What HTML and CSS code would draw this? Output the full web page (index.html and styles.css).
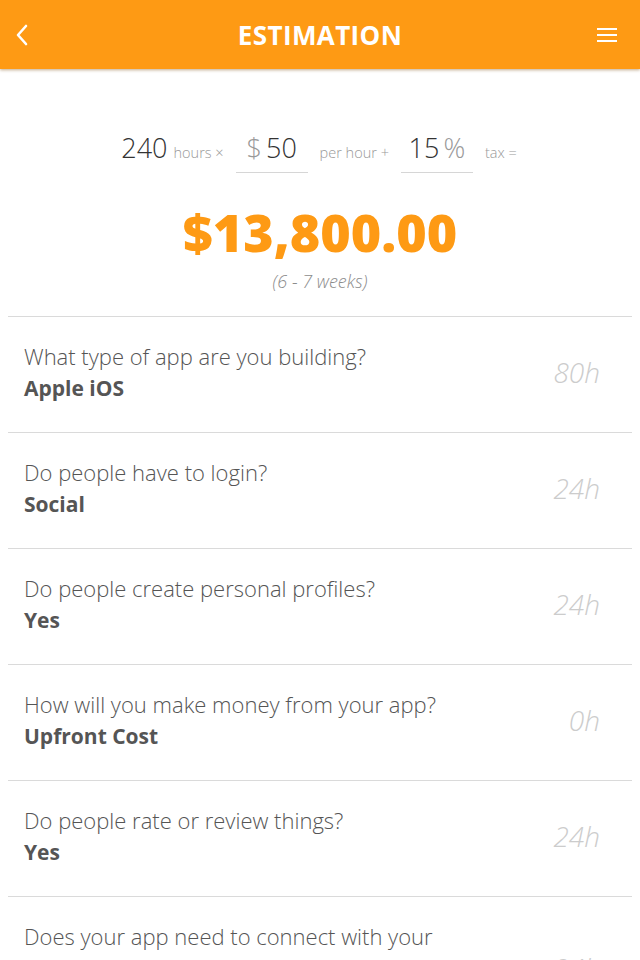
FILE: index.html
```html
<!DOCTYPE html>
<html lang="en">

<head>
  <meta charset="UTF-8" />
  <meta name="viewport" content="width=device-width, initial-scale=1.0" />
  <title>Estimation</title>
  <link rel="stylesheet" href="styles.css">
</head>

<body>
  <header class="topbar">
    <svg class="back" width="14" height="22" viewBox="0 0 14 22">
      <path d="M11 2 L3 11 L11 20" fill="none" stroke="#fff" stroke-width="2.6" stroke-linecap="round" stroke-linejoin="round" />
    </svg>
    <h1>ESTIMATION</h1>
    <svg class="menu" width="20" height="16" viewBox="0 0 20 16">
      <rect x="0" y="1" width="20" height="2" fill="#fff" />
      <rect x="0" y="7" width="20" height="2" fill="#fff" />
      <rect x="0" y="13" width="20" height="2" fill="#fff" />
    </svg>
  </header>

  <section class="calc">
    <div class="formula">
      <span class="num">240</span>
      <span class="unit">hours ×</span>
      <span class="field"><span class="sym">$</span> <span class="num">50</span></span>
      <span class="unit">per hour +</span>
      <span class="field"><span class="num">15</span> <span class="sym">%</span></span>
      <span class="unit">tax =</span>
    </div>
    <div class="total">$13,800.00</div>
    <div class="weeks">(6 - 7 weeks)</div>
  </section>

  <ul class="questions">
    <li class="row">
      <div class="qa">
        <div class="q">What type of app are you building?</div>
        <div class="a">Apple iOS</div>
      </div>
      <div class="hours">80h</div>
    </li>
    <li class="row">
      <div class="qa">
        <div class="q">Do people have to login?</div>
        <div class="a">Social</div>
      </div>
      <div class="hours">24h</div>
    </li>
    <li class="row">
      <div class="qa">
        <div class="q">Do people create personal profiles?</div>
        <div class="a">Yes</div>
      </div>
      <div class="hours">24h</div>
    </li>
    <li class="row">
      <div class="qa">
        <div class="q">How will you make money from your app?</div>
        <div class="a">Upfront Cost</div>
      </div>
      <div class="hours">0h</div>
    </li>
    <li class="row">
      <div class="qa">
        <div class="q">Do people rate or review things?</div>
        <div class="a">Yes</div>
      </div>
      <div class="hours">24h</div>
    </li>
    <li class="row">
      <div class="qa">
        <div class="q">Does your app need to connect with your website?</div>
        <div class="a">No</div>
      </div>
      <div class="hours">24h</div>
    </li>
  </ul>
</body>

</html>
```

FILE: styles.css
```css
* {
  box-sizing: border-box;
}

body {
  margin: 0;
  padding: 0;
  font-family: 'Open Sans', 'Lato', sans-serif;
  background-color: #ffffff;
  color: #555555;
  overflow: hidden;
}

.topbar {
  height: 69px;
  background-color: #fe9a14;
  display: flex;
  align-items: center;
  justify-content: space-between;
  padding: 0 23px 0 15px;
  box-shadow: 0 1px 3px rgba(150, 110, 60, 0.6);
  position: relative;
}

.topbar h1 {
  margin: 0;
  font-size: 26px;
  font-weight: 700;
  color: #ffffff;
  letter-spacing: 0.4px;
  padding-left: 14px;
}

.calc {
  padding-top: 60px;
  text-align: center;
}

.formula {
  display: flex;
  justify-content: center;
  align-items: baseline;
  padding-left: 4px;
}

.formula .num {
  font-size: 27px;
  font-weight: 300;
  color: #333333;
}

.formula .sym {
  font-size: 27px;
  font-weight: 300;
  color: #999999;
}

.formula .unit {
  font-size: 14.5px;
  font-weight: 300;
  color: #999999;
  margin: 0 6px;
}

.formula .unit:first-of-type {
  margin-right: 12px;
}

.field {
  display: inline-block;
  width: 72px;
  margin: 0 6px;
  padding-bottom: 6px;
  border-bottom: 1px solid #d6d6d6;
  text-align: center;
}

.total {
  margin-top: 28px;
  font-size: 52px;
  font-weight: 800;
  color: #fe9a14;
  line-height: 62px;
}

.weeks {
  margin-top: 6px;
  font-size: 18px;
  font-style: italic;
  font-weight: 300;
  color: #8c8c8c;
}

.questions {
  list-style: none;
  margin: 23px 8px 0;
  padding: 0;
}

.row {
  min-height: 116px;
  border-top: 1px solid #dadada;
  display: flex;
  align-items: center;
  justify-content: space-between;
  padding: 23px 32px 28px 16px;
}

.qa {
  max-width: 440px;
}

.q {
  font-size: 22px;
  font-weight: 300;
  color: #555555;
  line-height: 32px;
}

.a {
  font-size: 21px;
  font-weight: 700;
  color: #555555;
  line-height: 32px;
}

.hours {
  font-size: 28px;
  font-style: italic;
  font-weight: 300;
  color: #cccccc;
}
```
